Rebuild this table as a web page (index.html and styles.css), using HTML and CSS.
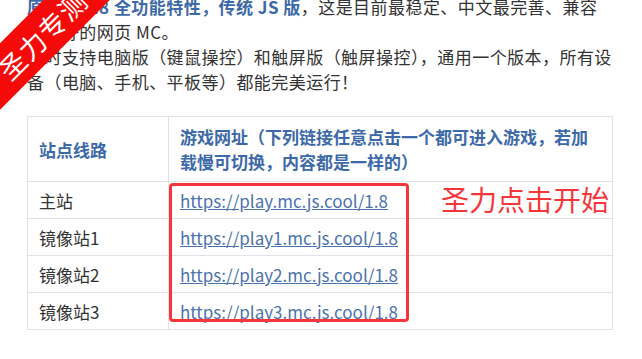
FILE: index.html
```html
<!DOCTYPE html>
<html lang="zh-CN">
<head>
<meta charset="utf-8">
<title>网页版 MC 1.8.8</title>
<link rel="stylesheet" href="styles.css">
</head>
<body>
<div class="ribbon"><span>圣力专测</span></div>
<main class="content">
  <p class="intro"><strong class="hl">原版 1.8.8 全功能特性，传统 JS 版</strong>，这是目前最稳定、中文最完善、兼容<br>性最好的网页 MC。</p>
  <p class="intro">同时支持电脑版（键鼠操控）和触屏版（触屏操控），通用一个版本，所有设<br>备（电脑、手机、平板等）都能完美运行！</p>

  <div class="table-wrap">
    <table class="sites">
      <thead>
        <tr>
          <th class="col-name">站点线路</th>
          <th>游戏网址（下列链接任意点击一个都可进入游戏，若加载慢可切换，内容都是一样的）</th>
        </tr>
      </thead>
      <tbody>
        <tr><td>主站</td><td><a href="#">https://play.mc.js.cool/1.8</a></td></tr>
        <tr><td>镜像站1</td><td><a href="#">https://play1.mc.js.cool/1.8</a></td></tr>
        <tr><td>镜像站2</td><td><a href="#">https://play2.mc.js.cool/1.8</a></td></tr>
        <tr><td>镜像站3</td><td><a href="#">https://play3.mc.js.cool/1.8</a></td></tr>
      </tbody>
    </table>
    <div class="mark-box"></div>
    <div class="mark-note">圣力点击开始</div>
  </div>
</main>
</body>
</html>
```

FILE: styles.css
```css
html, body {
  margin: 0;
  padding: 0;
  overflow: hidden;
  background: #ffffff;
}

body {
  font-family: "Noto Sans CJK SC", "Noto Sans", sans-serif;
  font-size: 17px;
  line-height: 25px;
  color: #333333;
  position: relative;
  height: 359px;
}

.content {
  width: 586px;
  margin: -6px 0 0 27px;
}

.intro {
  margin: 0;
  letter-spacing: 0.45px;
}

.hl {
  color: #3d69a8;
  font-weight: 700;
}

.table-wrap {
  position: relative;
  margin-top: 22px;
}

.sites {
  width: 586px;
  border-collapse: collapse;
  border: 1px solid #dfe3e8;
}

.sites th,
.sites td {
  border: 1px solid #dfe3e8;
  text-align: left;
  vertical-align: middle;
}

.sites th {
  color: #3d69a8;
  font-weight: 700;
  padding: 7px 11px;
}

.sites td {
  padding: 6px 11px 5px;
}

.col-name {
  width: 118px;
}

.sites a {
  color: #4a72ad;
  text-decoration: underline;
}

/* red frame around the link column */
.mark-box {
  position: absolute;
  left: 142px;
  top: 67px;
  width: 234px;
  height: 133px;
  border: 3px solid #f5363a;
  border-radius: 4px;
}

.mark-note {
  position: absolute;
  left: 414px;
  top: 66px;
  font-size: 28px;
  line-height: 34px;
  color: #f5363a;
  white-space: nowrap;
}

/* corner ribbon */
.ribbon {
  position: absolute;
  left: -68px;
  top: 11px;
  width: 220px;
  height: 47px;
  background: #f50a0a;
  transform: rotate(-45deg);
  display: flex;
  align-items: center;
  justify-content: center;
  z-index: 2;
}

.ribbon span {
  color: #ffffff;
  font-size: 27px;
  letter-spacing: 1px;
  line-height: 1;
}
```
